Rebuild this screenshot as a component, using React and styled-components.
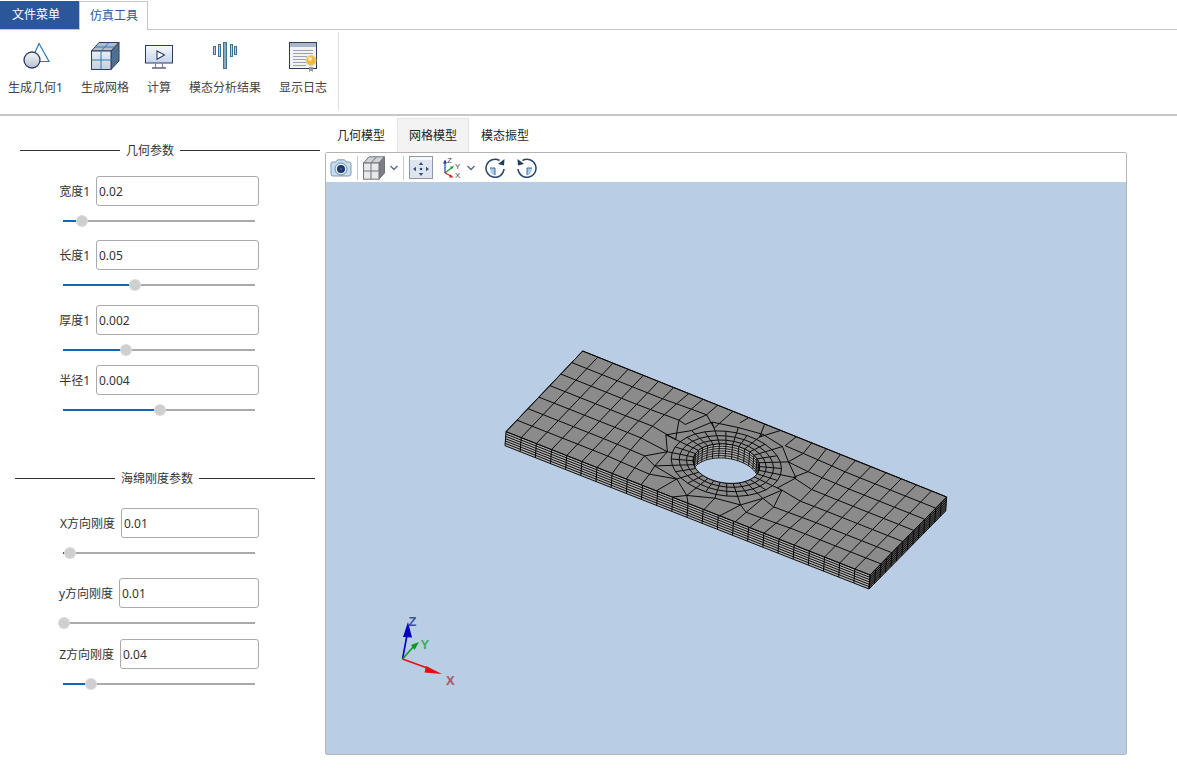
import styled, { createGlobalStyle } from "styled-components";

const GlobalStyle = createGlobalStyle`
  html, body {
    margin: 0;
    padding: 0;
    background: #fff;
    font-family: "Noto Sans", "Noto Sans CJK SC", sans-serif;
    font-size: 12px;
    color: #333;
  }
`;

const Page = styled.div`
  width: 1177px;
  height: 781px;
  overflow: hidden;
`;

const MenuBar = styled.div`
  display: flex;
  height: 28px;
  padding-top: 1px;
  box-sizing: content-box;
  border-bottom: 1px solid #c6c6c6;
`;

const FileTab = styled.div`
  width: 79px;
  height: 28px;
  box-sizing: border-box;
  padding-left: 12px;
  line-height: 28px;
  background: #2b579a;
  color: #fff;
`;

const ToolTab = styled.div`
  width: 69px;
  height: 29px;
  box-sizing: border-box;
  padding-left: 10px;
  line-height: 27px;
  background: #fff;
  color: #2b579a;
  border: 1px solid #c6c6c6;
  border-bottom: none;
`;

const Ribbon = styled.div`
  display: flex;
  height: 84px;
  padding-left: 8px;
  border-bottom: 2px solid #c8c8c8;
`;

const RibbonItem = styled.div`
  display: flex;
  flex-direction: column;
  align-items: center;
  margin-right: 18px;
  padding-top: 11px;
  color: #444;
  svg {
    display: block;
    margin: 0 -10px;
  }
  span {
    margin-top: 7px;
    line-height: 16px;
    white-space: nowrap;
  }
`;

const RibbonDivider = styled.div`
  width: 1px;
  height: 78px;
  margin: 2px 0 0 -7px;
  background: #dcdcdc;
`;

const Body = styled.div`
  display: flex;
`;

const LeftPanel = styled.div`
  width: 325px;
  flex: none;
  padding-top: 26px;
`;

const SectionTitle = styled.div`
  display: flex;
  align-items: center;
  gap: 6px;
  height: 16px;
  margin-top: ${(p) => p.$top}px;
  margin-left: ${(p) => p.$left}px;
  line-height: 16px;
  white-space: nowrap;
`;

const TitleText = styled.span`
  padding-top: 2px;
`;

const TitleLine = styled.div`
  width: ${(p) => p.$w}px;
  height: 1px;
  background: #333;
`;

const FieldRow = styled.div`
  display: flex;
  justify-content: flex-end;
  align-items: center;
  gap: 6px;
  width: 259px;
  margin-top: ${(p) => p.$top}px;
`;

const FieldLabel = styled.label`
  white-space: nowrap;
`;

const FieldInput = styled.input`
  width: ${(p) => p.$w}px;
  height: 30px;
  box-sizing: border-box;
  padding: 0 2px;
  border: 1px solid #aaa;
  border-radius: 3px;
  font: inherit;
  color: #333;
  background: #fff;
  outline: none;
`;

const SliderBox = styled.div`
  position: relative;
  width: 192px;
  height: 16px;
  margin: 7px 0 0 63px;
`;

const SliderTrack = styled.div`
  position: absolute;
  left: 0;
  right: 0;
  top: 7px;
  height: 2px;
  background: #aaa;
`;

const SliderFill = styled.div`
  position: absolute;
  left: 0;
  top: 7px;
  height: 2px;
  background: #1066b8;
`;

const SliderThumb = styled.div`
  position: absolute;
  top: 3px;
  width: 10px;
  height: 10px;
  margin-left: -5px;
  border-radius: 50%;
  background: #cfcfcf;
  box-shadow: 0 0 0 1px #dadada;
`;

const RightPanel = styled.div`
  width: 802px;
  flex: none;
  padding-top: 2px;
`;

const ViewTabs = styled.div`
  display: flex;
  height: 34px;
`;

const ViewTab = styled.div`
  width: 72px;
  box-sizing: border-box;
  line-height: 34px;
  text-align: center;
  color: #222;
  background: ${(p) => (p.$active ? "#f3f3f3" : "transparent")};
  border: 1px solid ${(p) => (p.$active ? "#e4e4e4" : "transparent")};
  border-bottom: none;
`;

const Frame = styled.div`
  height: 603px;
  box-sizing: border-box;
  border: 1px solid #b4b4b4;
  border-radius: 2px;
  display: flex;
  flex-direction: column;
`;

const Toolbar = styled.div`
  display: flex;
  align-items: center;
  height: 29px;
  flex: none;
  padding-left: 4px;
  background: #fff;
`;

const ToolIcon = styled.svg`
  display: block;
  flex: none;
  margin-left: ${(p) => p.$ml || 0}px;
`;

const ToolSep = styled.div`
  width: 1px;
  height: 24px;
  flex: none;
  margin-left: ${(p) => p.$ml}px;
  background: #c8c8c8;
`;

const Viewport = styled.div`
  flex: 1;
  background: #b9cde5;
  svg {
    display: block;
  }
`;

/* plate mesh, everything in page pixels through the viewBox */
const pt = (u, v, z = 0) => [
  582.7 + 364 * u - 76.7 * v - z,
  351 + 146 * u + 80.7 * v - 2.7 * u * v + 14 * z,
];
const f = (p) => `${p[0].toFixed(2)} ${p[1].toFixed(2)}`;
const seg = (a, b) => `M${f(a)}L${f(b)}`;
const poly = (list) => "M" + list.map(f).join("L") + "Z";

const NU = 24;
const NV = 7;
const RU = 0.081;
const RV = 0.2;
const SPOKES = 32;
const RINGS = [1, 1.2, 1.42, 1.66];
const OUTER = 2;

const ringPoint = (k, rho) => {
  const a = (k / SPOKES) * Math.PI * 2 + 0.1;
  return [0.5 + RU * rho * Math.cos(a), 0.5 + RV * rho * Math.sin(a)];
};

// the last band is not round in the reference, it wanders a bit
const outerPoint = (k) => ringPoint(k, OUTER + 0.2 * Math.sin(k * 1.7));

const rhoOf = (u, v) => Math.hypot((u - 0.5) / RU, (v - 0.5) / RV);

const gridNode = (i, j) => {
  const u = i / NU;
  const v = j / NV;
  const rho = rhoOf(u, v);
  if (rho < OUTER + 0.2) {
    const a = Math.atan2((v - 0.5) / RV, (u - 0.5) / RU);
    const k = Math.round(((a - 0.1) / (Math.PI * 2)) * (SPOKES / 2)) * 2;
    return { inside: true, p: outerPoint(k) };
  }
  const push = Math.max(0, 1 - (rho - OUTER) / 1.6) * 0.08;
  const nu = 0.5 + (u - 0.5) * (1 + push);
  const nv = j === 0 || j === NV ? v : 0.5 + (v - 0.5) * (1 + push * 0.7);
  return { inside: false, p: [nu, nv] };
};

const buildMesh = () => {
  let d = "";
  const edge = (a, b) => {
    if (a.inside && b.inside) return;
    d += seg(pt(...a.p), pt(...b.p));
  };
  for (let i = 0; i <= NU; i++) {
    for (let j = 0; j <= NV; j++) {
      if (j < NV) edge(gridNode(i, j), gridNode(i, j + 1));
      if (i < NU) edge(gridNode(i, j), gridNode(i + 1, j));
    }
  }
  const last = RINGS[RINGS.length - 1];
  for (let k = 0; k < SPOKES; k++) {
    RINGS.forEach((rho, r) => {
      d += seg(pt(...ringPoint(k, rho)), pt(...ringPoint(k + 1, rho)));
      if (r > 0) d += seg(pt(...ringPoint(k, RINGS[r - 1])), pt(...ringPoint(k, rho)));
    });
    if (k % 2 === 0) {
      d += seg(pt(...ringPoint(k, last)), pt(...outerPoint(k)));
      d += seg(pt(...outerPoint(k)), pt(...outerPoint(k + 2)));
    }
  }
  return d;
};

const meshPath = buildMesh();

const buildSides = () => {
  let front = "";
  let right = "";
  for (let i = 0; i <= NU; i++) front += seg(pt(i / NU, 1), pt(i / NU, 1, 1));
  for (let k = 1; k <= 6; k++) {
    front += seg(pt(0, 1, k / 6), pt(1, 1, k / 6));
    right += seg(pt(1, 1, k / 6), pt(1, 0, k / 6));
  }
  for (let j = 0; j <= NV * 2; j++) right += seg(pt(1, j / (NV * 2)), pt(1, j / (NV * 2), 1));
  return { front, right };
};

const sides = buildSides();

const buildHole = () => {
  const round = [];
  for (let a = 0; a < 72; a++) round.push(ringPoint((a / 72) * SPOKES, 1));
  const ring = (z) => poly(round.map((c) => pt(c[0], c[1], z)));
  let wall = "";
  for (let k = 1; k < 6; k++) wall += ring(k / 6);
  for (let k = 0; k < SPOKES; k++) {
    const c = ringPoint(k, 1);
    wall += seg(pt(c[0], c[1]), pt(c[0], c[1], 1));
  }
  return { top: ring(0), bottom: ring(1), wall };
};

const hole = buildHole();

const AxisText = styled.text`
  font-family: "Liberation Sans", sans-serif;
  font-size: 13px;
  font-weight: bold;
`;

const PlateModel = () => (
  <svg width="800" height="572" viewBox="326 182 800 572">
    <defs>
      <clipPath id="holeClip">
        <path d={hole.top} />
      </clipPath>
    </defs>
    <path d={poly([pt(0, 1), pt(1, 1), pt(1, 1, 1), pt(0, 1, 1)])} fill="#b4b4b4" />
    <path d={poly([pt(1, 1), pt(1, 0), pt(1, 0, 1), pt(1, 1, 1)])} fill="#5a5a5a" />
    <path d={poly([pt(0, 0), pt(1, 0), pt(1, 1), pt(0, 1)])} fill="#8b8b8b" />
    <path d={sides.front} stroke="#0a0a0a" strokeWidth="1" fill="none" />
    <path d={sides.right} stroke="#0a0a0a" strokeWidth="1" fill="none" />
    <path d={meshPath} stroke="#0a0a0a" strokeWidth="1" fill="none" />
    <g clipPath="url(#holeClip)">
      <path d={hole.top} fill="#b4b4b4" />
      <path d={hole.wall} stroke="#0a0a0a" strokeWidth="0.9" fill="none" />
      <path d={hole.bottom} fill="#b9cde5" stroke="#0a0a0a" strokeWidth="0.9" />
    </g>
    <path d={hole.top} fill="none" stroke="#0a0a0a" strokeWidth="1" />
    <path d={poly([pt(0, 0), pt(1, 0), pt(1, 1), pt(0, 1)])} fill="none" stroke="#0a0a0a" strokeWidth="1" />

    <line x1="402.5" y1="659" x2="408" y2="630" stroke="#0000c8" strokeWidth="1.6" />
    <polygon points="408,622 403,637 412,637.5" fill="#0000c8" />
    <line x1="402.5" y1="659" x2="414" y2="646" stroke="#0a9a1e" strokeWidth="1.6" />
    <polygon points="419,642 411,645 414.5,650" fill="#0a9a1e" />
    <line x1="402.5" y1="659" x2="430" y2="669" stroke="#e01010" strokeWidth="1.6" />
    <polygon points="442,674 426,666 424.5,672.5" fill="#e01010" />
    <AxisText x="408.5" y="626" fill="#3c50a8">Z</AxisText>
    <AxisText x="420.5" y="649" fill="#3fae5c">Y</AxisText>
    <AxisText x="446" y="685" fill="#a85462">X</AxisText>
  </svg>
);

/* ribbon icons */
const GeometryIcon = () => (
  <svg width="32" height="32" viewBox="0 0 32 32">
    <defs>
      <linearGradient id="ballFill" x1="0" y1="0" x2="0" y2="1">
        <stop offset="0" stopColor="#f4f6fa" />
        <stop offset="1" stopColor="#b9c0cf" />
      </linearGradient>
    </defs>
    <path d="M20 2.5 30 20.5H12Z" fill="#fff" stroke="#2a7ab8" strokeWidth="1.2" />
    <circle cx="13" cy="19" r="8" fill="url(#ballFill)" stroke="#2c3b63" strokeWidth="1.3" />
  </svg>
);

const MeshIcon = () => (
  <svg width="32" height="32" viewBox="0 0 32 32">
    <defs>
      <linearGradient id="cubeFront" x1="0" y1="0" x2="0" y2="1">
        <stop offset="0" stopColor="#e9eef3" />
        <stop offset="1" stopColor="#c3d0dc" />
      </linearGradient>
    </defs>
    <path d="M2.5 10 10 1.5H30L22 10Z" fill="#b4bec9" stroke="#2c3b63" />
    <path d="M22 10 30 1.5V20L22 28.5Z" fill="#5d6c80" stroke="#2c3b63" />
    <rect x="2.5" y="10" width="19.5" height="18.5" fill="url(#cubeFront)" stroke="#2c3b63" />
    <path d="M12 10V28.5M2.5 19H22M12 10 20 1.5M6 6H26M26 5.5V24.5M22 19 30 10.5" stroke="#2a7ab8" fill="none" />
  </svg>
);

const ComputeIcon = () => (
  <svg width="32" height="32" viewBox="0 0 32 32">
    <defs>
      <linearGradient id="screenFill" x1="0" y1="0" x2="0" y2="1">
        <stop offset="0" stopColor="#f6f9fd" />
        <stop offset="1" stopColor="#c4d5ea" />
      </linearGradient>
    </defs>
    <rect x="2.5" y="4.5" width="27" height="17.5" fill="url(#screenFill)" stroke="#2c3b63" />
    <path d="M14 10 21.5 14 14 18.2Z" fill="#fff" stroke="#2c3b63" strokeWidth="1.1" />
    <path d="M12.5 22V26.5M19.5 22V26.5" stroke="#7c8798" strokeWidth="1.2" />
    <path d="M9 27H23" stroke="#2c3b63" strokeWidth="1.2" />
  </svg>
);

const ModalIcon = () => (
  <svg width="32" height="32" viewBox="0 0 32 32" fill="#b7cbde" stroke="#3f7193">
    <rect x="4.5" y="5.5" width="2" height="8" />
    <rect x="9.5" y="3.5" width="2" height="12" />
    <rect x="14.5" y="1.5" width="3" height="26" fill="#8aa8bf" />
    <rect x="21.5" y="3.5" width="2" height="12" />
    <rect x="25.5" y="5.5" width="2" height="8" />
  </svg>
);

const LogIcon = () => (
  <svg width="32" height="32" viewBox="0 0 32 32">
    <rect x="2.5" y="1.5" width="27" height="26" fill="#f2f2ee" stroke="#2c3b63" />
    <rect x="3" y="2" width="26" height="4" fill="#a9b8c8" />
    <path d="M6 9.5H26M6 12.5H26M6 15.5H20M6 18.5H19M6 21.5H19M6 24.5H19" stroke="#97a3b0" />
    <path d="M22 26V31L24 29.5 26 31V26Z" fill="#8e99a6" />
    <circle cx="24" cy="19.5" r="5" fill="#f5b73a" stroke="#d9d2b0" />
    <circle cx="23" cy="18" r="2" fill="#fde9a6" />
  </svg>
);

/* toolbar icons */
const CameraIcon = () => (
  <ToolIcon width="22" height="18" viewBox="0 0 22 18">
    <path d="M1 4.5Q1 3 3 3H6L7.5.8H14.5L16 3H19Q21 3 21 4.5V15Q21 17 19 17H3Q1 17 1 15Z" fill="#c8dcef" stroke="#7f9ab5" />
    <circle cx="11" cy="10" r="6" fill="#e7eff8" stroke="#6f8aa6" />
    <circle cx="11" cy="10" r="4" fill="#1d3569" />
    <circle cx="11" cy="10" r="1.5" fill="#36568f" />
  </ToolIcon>
);

const CubeIcon = () => (
  <ToolIcon $ml={5} width="22" height="24" viewBox="0 0 22 24">
    <path d="M.5 7 6 .8H21.5L16 7Z" fill="#cfd2d6" stroke="#6f747a" />
    <path d="M16 7 21.5 .8V17L16 23.2Z" fill="#7a7f86" stroke="#6f747a" />
    <rect x=".5" y="7" width="15.5" height="16.2" fill="#e6e8ea" stroke="#6f747a" />
    <path d="M8 7V23.2M.5 15H16M8 7 13.5 .8" stroke="#6f747a" fill="none" />
  </ToolIcon>
);

const Chevron = ({ ml }) => (
  <ToolIcon $ml={ml} width="10" height="8" viewBox="0 0 10 8">
    <path d="M1.5 2 5 5.5 8.5 2" fill="none" stroke="#5a6878" strokeWidth="1.3" />
  </ToolIcon>
);

const FitIcon = () => (
  <ToolIcon $ml={5} width="24" height="23" viewBox="0 0 24 23">
    <rect x=".5" y=".5" width="23" height="22" fill="#dfe5ee" stroke="#8b99ab" />
    <rect x="1" y="1" width="22" height="3" fill="#f5f7fa" />
    <path d="M12 6 14.2 9H9.800ZM12 20 14.2 17H9.800ZM4 13 7 10.800V15.200ZM20 13 17 10.800V15.200Z" fill="#33507c" />
    <circle cx="12" cy="13" r="1.3" fill="#33507c" />
  </ToolIcon>
);

const SmallAxis = styled.text`
  font-family: "Liberation Sans", sans-serif;
  font-size: 8px;
  fill: #444;
`;

const AxesIcon = () => (
  <ToolIcon $ml={10} width="20" height="24" viewBox="0 0 20 24">
    <path d="M2 17V6" stroke="#1a3fae" strokeWidth="1.2" />
    <path d="M2 3.500 4 7.500H0Z" fill="#1a3fae" />
    <path d="M2 17 9 11.500" stroke="#179a3a" strokeWidth="1.2" />
    <path d="M11 10 7 10.800 9 13.300Z" fill="#179a3a" />
    <path d="M2 17 8 20" stroke="#d92020" strokeWidth="1.2" />
    <path d="M10.500 21.500 6 21.500 7.500 18.300Z" fill="#d92020" />
    <SmallAxis x="4" y="7">Z</SmallAxis>
    <SmallAxis x="12" y="13">Y</SmallAxis>
    <SmallAxis x="12" y="22">X</SmallAxis>
  </ToolIcon>
);

const RotateIcon = ({ ml, flip }) => (
  <ToolIcon $ml={ml} width="20" height="20" viewBox="0 0 20 20">
    <g transform={flip ? "translate(20 0) scale(-1 1)" : undefined}>
      <path d="M5 10H10V17.5C7 17 5 14 5 10Z" fill="#a9cbe8" />
      <path d="M5 10H10V17" fill="none" stroke="#2f6fa8" />
      <path d="M14.5 2.500A9 9 0 1 0 19 11" fill="none" stroke="#26446f" strokeWidth="1.5" />
      <path d="M19.5 1 19 7.500 13 6Z" fill="#1f3a63" />
    </g>
  </ToolIcon>
);

const ribbonItems = [
  { label: "生成几何1", Icon: GeometryIcon },
  { label: "生成网格", Icon: MeshIcon },
  { label: "计算", Icon: ComputeIcon },
  { label: "模态分析结果", Icon: ModalIcon },
  { label: "显示日志", Icon: LogIcon },
];

const Slider = ({ at }) => (
  <SliderBox>
    <SliderTrack />
    <SliderFill style={{ width: at }} />
    <SliderThumb style={{ left: at }} />
  </SliderBox>
);

const Field = ({ label, value, top, width, at }) => (
  <>
    <FieldRow $top={top}>
      <FieldLabel>{label}</FieldLabel>
      <FieldInput $w={width} defaultValue={value} />
    </FieldRow>
    <Slider at={at} />
  </>
);

const App = () => (
  <Page>
    <GlobalStyle />
    <MenuBar>
      <FileTab>文件菜单</FileTab>
      <ToolTab>仿真工具</ToolTab>
    </MenuBar>
    <Ribbon>
      {ribbonItems.map(({ label, Icon }) => (
        <RibbonItem key={label}>
          <Icon />
          <span>{label}</span>
        </RibbonItem>
      ))}
      <RibbonDivider />
    </Ribbon>
    <Body>
      <LeftPanel>
        <SectionTitle $top={0} $left={20}>
          <TitleLine $w={100} />
          <TitleText>几何参数</TitleText>
          <TitleLine $w={140} />
        </SectionTitle>
        <Field label="宽度1" value="0.02" top={18} width={163} at={19} />
        <Field label="长度1" value="0.05" top={11} width={163} at={72} />
        <Field label="厚度1" value="0.002" top={12} width={163} at={63} />
        <Field label="半径1" value="0.004" top={7} width={163} at={97} />
        <SectionTitle $top={52} $left={15}>
          <TitleLine $w={100} />
          <TitleText>海绵刚度参数</TitleText>
          <TitleLine $w={116} />
        </SectionTitle>
        <Field label="X方向刚度" value="0.01" top={22} width={138} at={7} />
        <Field label="y方向刚度" value="0.01" top={17} width={140} at={1} />
        <Field label="Z方向刚度" value="0.04" top={8} width={139} at={28} />
      </LeftPanel>
      <RightPanel>
        <ViewTabs>
          <ViewTab>几何模型</ViewTab>
          <ViewTab $active>网格模型</ViewTab>
          <ViewTab>模态振型</ViewTab>
        </ViewTabs>
        <Frame>
          <Toolbar>
            <CameraIcon />
            <ToolSep $ml={5} />
            <CubeIcon />
            <Chevron ml={4} />
            <ToolSep $ml={4} />
            <FitIcon />
            <AxesIcon />
            <Chevron ml={3} />
            <RotateIcon ml={9} />
            <RotateIcon ml={12} flip />
          </Toolbar>
          <Viewport>
            <PlateModel />
          </Viewport>
        </Frame>
      </RightPanel>
    </Body>
  </Page>
);

export default App;
